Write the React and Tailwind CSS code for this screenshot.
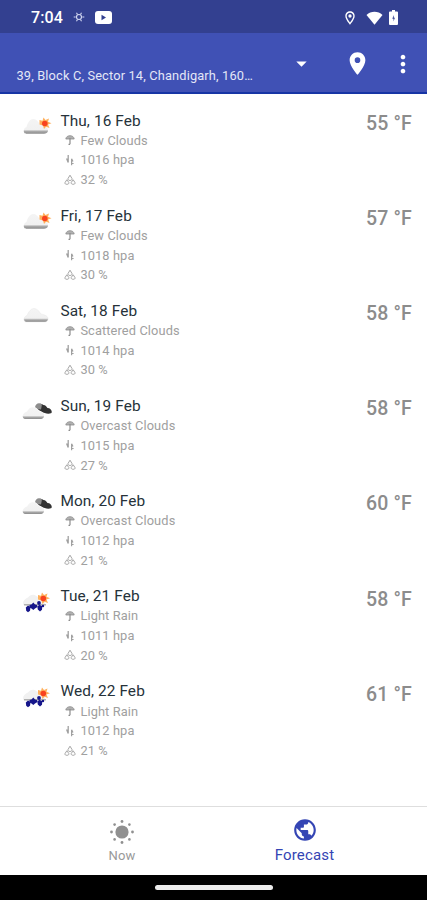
import { MdLocationOn, MdMoreVert, MdPublic, MdArrowDropDown, MdOutlineLocationOn } from 'react-icons/md'

const forecast = [
  { date: 'Thu, 16 Feb', sky: 'Few Clouds', icon: 'few', pressure: 1016, humidity: 32, temp: 55 },
  { date: 'Fri, 17 Feb', sky: 'Few Clouds', icon: 'few', pressure: 1018, humidity: 30, temp: 57 },
  { date: 'Sat, 18 Feb', sky: 'Scattered Clouds', icon: 'scattered', pressure: 1014, humidity: 30, temp: 58 },
  { date: 'Sun, 19 Feb', sky: 'Overcast Clouds', icon: 'overcast', pressure: 1015, humidity: 27, temp: 58 },
  { date: 'Mon, 20 Feb', sky: 'Overcast Clouds', icon: 'overcast', pressure: 1012, humidity: 21, temp: 60 },
  { date: 'Tue, 21 Feb', sky: 'Light Rain', icon: 'rain', pressure: 1011, humidity: 20, temp: 58 },
  { date: 'Wed, 22 Feb', sky: 'Light Rain', icon: 'rain', pressure: 1012, humidity: 21, temp: 61 },
]

function SunBurst() {
  return (
    <g>
      <path d="M17.500 6l3 .8 1-3.300 2 2.500 3.500-1.500-1 3.300 3.500 1.500-3.500 1.200 1.500 3.500-3.500-1.200-2 2.200-1-3.500-3.500-1z" fill="#ffb05c" />
      <circle cx="22.800" cy="9.500" r="2.800" fill="#f8431f" />
    </g>
  )
}

function WeatherIcon({ kind }) {
  return (
    <svg viewBox="0 0 30 26" className="h-[26px] w-[30px]">
      <defs>
        <linearGradient id="cloud" x1="0" y1="0" x2="0" y2="1">
          <stop offset="0" stopColor="#f4f4f4" />
          <stop offset="0.72" stopColor="#f1f1f1" />
          <stop offset="0.84" stopColor="#aaa" />
          <stop offset="1" stopColor="#8c8c8c" />
        </linearGradient>
      </defs>
      {kind === 'few' && (
        <>
          <path d="M2.500 19C1 17 2 14 4.500 13C5.500 9 8 5 11 5C14 5 16 7 18 10.500C22 11.500 26.500 13 26 17C25.500 19 24 19.700 22 19.700H5C4 19.700 3 19.700 2.500 19Z" fill="url(#cloud)" />
          <SunBurst />
        </>
      )}
      {kind === 'scattered' && (
        <path d="M3 17.500C1 16 2 12.500 5 11.500C6.500 8 9 4.500 12 4.500C15 4.500 17 7 19 10C23 11 26.500 12 26 15.500C25.500 17.500 24 18 22 18H5C4 18 3.500 18 3 17.500Z" fill="url(#cloud)" stroke="#e2e2e2" strokeWidth="0.400" />
      )}
      {kind === 'overcast' && (
        <>
          <path d="M14.500 8c1-3.500 4-4 7-2 2 0 3 1.500 4 3 3 0 5 3 4 5-3 1.500-7 .5-10-1.500-2-1-4.500-2-5-4.500z" fill="#333" />
          <path d="M13 8c1-4 4-5 7-2.500l-1 5c-3 0-5-1-6-2.500z" fill="#8d8d8d" />
          <path d="M1 18.500C0 16 2 13.500 5 12.500C7 8.500 10 7.500 12 8.500C15 8.500 16 10.500 17.500 12.500C21 13 22.500 14.500 22 17.500C21.500 19.500 20 20 18 20H4C2.500 20 1.500 19.500 1 18.500Z" fill="url(#cloud)" />
        </>
      )}
      {kind === 'rain' && (
        <>
          <path d="M1.500 16C0 13 3 9.500 6 8.500C8 5.500 12 4.500 15 7.500C19 9 24 12 23 15.500C21 17.500 4 17.500 1.500 16Z" fill="#f1f1f1" />
          <path d="M2 15.800h22" stroke="#a0a0a0" strokeWidth="1.200" />
          <g transform="translate(-1.500 0)">
            <SunBurst />
          </g>
          <g fill="#15158a">
            <path d="M7.500 16l2-.5 1.800-2 1.700 2 2 .5.500 2-2.500 1.500-1.700 1.500-1.800-1.500-2-1z" />
            <path d="M3.800 18.500l2.200-2 2.500 1.500-.5 3.700-2 1.500-1.800-1.500z" />
            <path d="M15.300 17.500l2.200-1.800 2.800 1.500-.3 3.500-2 1.700-2.200-1.800z" />
            <circle cx="17" cy="14" r="1.900" />
            <circle cx="21" cy="17" r="1.200" />
          </g>
        </>
      )}
    </svg>
  )
}

function UmbrellaIcon() {
  return (
    <svg viewBox="0 0 12 12" className="size-3" fill="none" stroke="#8d8d8d">
      <path d="M1.800 5C2.200 2.700 3.800 1.700 6 1.700s3.800 1 4.200 3.300z" fill="#b0b0b0" strokeWidth="0.800" />
      <path d="M6 4v6.200M6 10.300H4.500" strokeWidth="1.200" />
    </svg>
  )
}

function PressureIcon() {
  return (
    <svg viewBox="0 0 12 12" className="size-3" fill="none" stroke="#a0a0a0">
      <path d="M4.200 1v7.500M2.600 4.500L4.200 8.500" strokeWidth="1.300" />
      <path d="M7.600 11.200V4.800M9 7.500L7.600 4.800M7.600 9.500h2" strokeWidth="1.200" />
    </svg>
  )
}

function HumidityIcon() {
  return (
    <svg viewBox="0 0 12 12" className="size-3" fill="none" stroke="#a0a0a0" strokeWidth="0.950">
      <path d="M6 1.200L4 4.500c-.5 1.200.8 2 2 2s2.500-.8 2-2z" />
      <path d="M2.800 5.800L1 8.600c-.5 1.200.8 1.700 2 1.700s2.200-.7 1.800-1.900zM9.200 5.800L7.200 8.400c-.3 1.300.8 1.900 1.900 1.900s2.400-.5 1.900-1.700z" />
    </svg>
  )
}

function Detail({ icon: Icon, children }) {
  return (
    <div className="flex h-[19.7px] items-center gap-[4.5px] pl-[3.5px] text-[12.8px] tracking-[0.12px] text-[#a0a0a0]">
      <Icon />
      <span className="whitespace-nowrap">{children}</span>
    </div>
  )
}

function ForecastRow({ day }) {
  return (
    <li className="flex h-[95.15px] items-start pr-[15px] pl-[22px]">
      <div className="mt-[3px] w-[38.4px]">
        <WeatherIcon kind={day.icon} />
      </div>
      <div className="flex-1">
        <div className="h-5 text-[15.4px] leading-5 tracking-[0.1px] text-[#26323a]">{day.date}</div>
        <Detail icon={UmbrellaIcon}>{day.sky}</Detail>
        <Detail icon={PressureIcon}>{day.pressure} hpa</Detail>
        <Detail icon={HumidityIcon}>{day.humidity} %</Detail>
      </div>
      <div className="pt-[2.3px] text-[19.5px] leading-[22px] font-medium tracking-[0.15px] text-[#8c8c8c]">{day.temp} °F</div>
    </li>
  )
}

function StatusBar() {
  return (
    <div className="flex h-[33px] shrink-0 items-center bg-[#334090] pr-[29px] pl-[31px] text-white">
      <span className="w-[42px] pt-0.5 text-[16px] font-medium tracking-[0.1px]">7:04</span>
      <svg viewBox="0 0 12 12" className="mt-px size-3" fill="none" stroke="#d4d9f3">
        <circle cx="6" cy="6" r="2.500" strokeWidth="1.100" />
        <path d="M3.500 1.800l1 1.700M8.500 1.800l-1 1.700M.7 6h2M9.300 6h2M3.500 10.200l1-1.700M8.500 10.200l-1-1.700" strokeWidth="1.100" />
      </svg>
      <svg viewBox="0 0 17 13" className="mt-0.5 ml-2.5 h-[13px] w-[17px]">
        <rect width="17" height="13" rx="3" fill="#fff" />
        <path d="M6.500 3.800v5.400l4.500-2.700z" fill="#334090" />
      </svg>
      <div className="mt-0.5 ml-auto flex items-center">
        <MdOutlineLocationOn className="size-4" />
        <svg viewBox="0 0 17 14" className="ml-2 h-3.5 w-[17px]" fill="#fff">
          <path d="M.5 4C5-.2 12-.2 16.500 4L8.500 13.800z" />
        </svg>
        <svg viewBox="0 0 9 15" className="ml-1.5 h-[15px] w-[9px]">
          <path d="M3 0h3v1.500h2a1 1 0 0 1 1 1V14a1 1 0 0 1-1 1H1a1 1 0 0 1-1-1V2.500a1 1 0 0 1 1-1h2z" fill="#fff" />
          <path d="M4.800 5L3.300 8.700h1.200V11.500l1.400-3.700H4.800z" fill="#334090" />
        </svg>
      </div>
    </div>
  )
}

function LocationBar() {
  return (
    <header className="flex h-[61px] shrink-0 items-start border-b-2 border-[#1735a5] bg-[#4051b5] pl-[16.5px] text-white">
      <div className="mt-[35px] w-[272px] text-[12.8px] leading-4 tracking-[0.16px] whitespace-nowrap text-[#e4e7f7]">
        39, Block C, Sector 14, Chandigarh, 160…
      </div>
      <MdArrowDropDown className="mt-[18px] size-[25px]" />
      <MdLocationOn className="mt-[17px] ml-[30px] size-[27px]" />
      <MdMoreVert className="mt-[17px] ml-[18px] size-[28px]" />
    </header>
  )
}

function NowIcon() {
  return (
    <svg viewBox="0 0 26 26" className="size-[26px]" fill="#909090">
      <circle cx="13" cy="13" r="6.600" />
      <circle cx="13" cy="2.500" r="1.400" />
      <circle cx="13" cy="23.500" r="1.400" />
      <circle cx="2.500" cy="13" r="1.400" />
      <circle cx="23.500" cy="13" r="1.400" />
      <circle cx="5.600" cy="5.600" r="1.300" />
      <circle cx="20.400" cy="5.600" r="1.300" />
      <circle cx="5.600" cy="20.400" r="1.300" />
      <circle cx="20.400" cy="20.400" r="1.300" />
    </svg>
  )
}

export default function App() {
  return (
    <div className="flex h-[900px] w-[427px] flex-col overflow-hidden bg-white font-['Roboto',sans-serif]">
      <StatusBar />
      <LocationBar />
      <ul className="flex-1 pt-[16.5px]">
        {forecast.map((day) => (
          <ForecastRow key={day.date} day={day} />
        ))}
      </ul>
      <nav className="flex h-[69px] shrink-0 border-t border-[#dedede] px-[31px]">
        <div className="flex w-[182px] flex-col items-center pt-3">
          <NowIcon />
          <span className="mt-[3px] text-[13px] leading-4 tracking-[0.1px] text-[#999]">Now</span>
        </div>
        <div className="flex flex-1 flex-col items-center pt-[10px] text-[#3445b4]">
          <MdPublic className="size-[26px]" />
          <span className="mt-[3px] text-[15px] leading-[18px] tracking-[0.15px]">Forecast</span>
        </div>
      </nav>
      <div className="flex h-[25px] shrink-0 justify-center bg-black pt-2.5">
        <div className="h-[5px] w-[118px] rounded-full bg-[#ececec]" />
      </div>
    </div>
  )
}
